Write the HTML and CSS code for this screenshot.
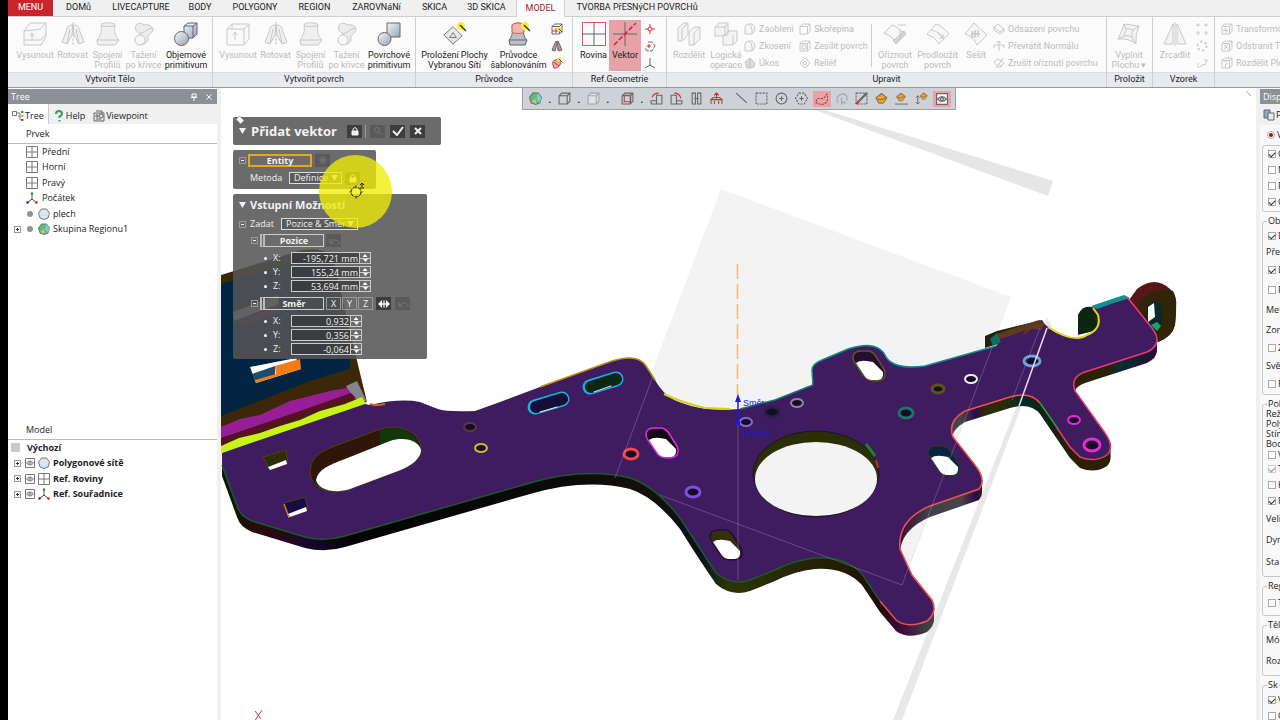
FILE: index.html
```html
<!DOCTYPE html>
<html lang="cs">
<head>
<meta charset="utf-8">
<title>Přidat vektor</title>
<link rel="stylesheet" href="styles.css">
</head>
<body>
<svg class="defs" aria-hidden="true">
  <defs>
    <linearGradient id="metal" x1="0" y1="0" x2="1" y2="1"><stop offset="0" stop-color="#f4f6fa"/><stop offset="1" stop-color="#99a2b3"/></linearGradient>
    <symbol id="extrude" viewBox="0 0 24 24"><path d="M1 9 7 1h16v14l-5 8H1z" fill="#f8f8f8"/><path d="M1 9Q13 8 17 7L23 1M1 18h17l5-6M9 19v-8m-2 3 2-3 2 3"/></symbol>
    <symbol id="openbox" viewBox="0 0 24 24"><path d="M1 7 6 2h17v15l-5 6H1zM1 7h17l5-5M18 7v16M6 2v5M9 18v-8m-2 3 2-3 2 3" fill="#f9f9f9"/></symbol>
    <symbol id="revolve" viewBox="0 0 24 24"><path d="M12 3C6 3 6 6 5 10L1 20l5 2 5-9zM12 3c6 0 6 3 7 7l4 10-5 2-5-9zM6 22l3-15M18 22 15 7" fill="#f0f0f0"/><path d="M12 0v24" stroke-dasharray="3 1"/></symbol>
    <symbol id="loft" viewBox="0 0 24 24"><path d="M5 3c0-3 14-3 14 0-1 7 0 11 4 15l-4 5H2l-1-5C5 13 6 9 5 3z" fill="#f0f0f0"/><path d="M5 3c2 2 12 2 14 0M1 18h18l4 0"/></symbol>
    <symbol id="sweep" viewBox="0 0 24 24"><path d="M4 8C1 2 9-1 12 3c3-1 8 0 9 4 0 5-7 6-5 9 1 6-8 9-11 4-3-5 3-7 5-9-3 1-5-1-6-3z" fill="#ececec"/><circle cx="8" cy="18" r="5" fill="#f8f8f8"/><path d="M10 11c4-1 5-4 10-5"/></symbol>
    <symbol id="solid" viewBox="0 0 24 24"><path d="M10 4 14 1h9v11l-4 4h-9zM10 4h9l4-3M19 4v12" fill="url(#metal)"/><circle cx="7.500" cy="16.500" r="7" fill="url(#metal)"/></symbol>
    <symbol id="surf" viewBox="0 0 24 24"><path d="M10 1h13v14H10z" fill="url(#metal)"/><circle cx="7.500" cy="17" r="6.500" fill="url(#metal)"/></symbol>
    <symbol id="quad" viewBox="0 0 24 24"><path d="M12 2 23 13 12 23 1 12z" fill="#e5e7ec"/><path d="M8 15h8l-4-6z"/></symbol>
    <symbol id="wand" viewBox="0 0 10 10"><circle cx="4" cy="4" r="4" fill="#f6ee3c" stroke="none"/><path d="m3 3 6 6" stroke="#333" stroke-width="1.500"/></symbol>
    <symbol id="grid" viewBox="0 0 12 12"><path d="M.5.5h11v11H.5zM6 .5v11M.5 6h11" fill="#fff" stroke="#777"/></symbol>
    <symbol id="axes" viewBox="0 0 12 12"><path d="M6 7V1" stroke="#2a7a2a"/><path d="m6 7-5 4" stroke="#2b2b9a"/><path d="m6 7 5 4" stroke="#b52222"/><circle cx="6" cy="1.500" r="1.200" fill="#2a8a2a" stroke="none"/><circle cx="1.500" cy="10.500" r="1.200" fill="#22a" stroke="none"/><circle cx="10.500" cy="10.500" r="1.200" fill="#b22" stroke="none"/></symbol>
    <symbol id="ball" viewBox="0 0 12 12"><path d="M3.500 1h5l3 4-1.500 5-4 1.500L2 10 .5 5z" fill="#dce6ee" stroke="#777"/></symbol>
    <symbol id="cball" viewBox="0 0 12 12"><path d="M3.500 1h5l3 4-1.500 5-4 1.500L2 10 .5 5z" fill="#5fc06a" stroke="#5d757c"/><path d="M8 1l3.500 4L10 10 7 7z" fill="#7cc8e0" stroke="none"/><path d="M2 9l4-3 1 5z" fill="#e8b47a" stroke="none"/></symbol>
    <symbol id="eye" viewBox="0 0 10 10"><path d="M.5.5h9v9h-9z" fill="#fff"/><path d="M1.500 5q3.500-4 7 0-3.500 4-7 0z"/><circle cx="5" cy="5" r="1.200"/></symbol>
    <symbol id="split" viewBox="0 0 24 24"><path d="M1 6 7 1h4v12l-6 6H1zM12 10l5-5h6v12l-6 6h-5z" fill="#f4f4f4"/><path d="M5 19V7l6-6M17 23V11l6-6"/></symbol>
    <symbol id="bool" viewBox="0 0 24 24"><path d="M1 5 5 1h9v9l-4 4H1zM9 13h5V9h9v10l-4 4H9z" fill="#f4f4f4"/><path d="M1 5h10v9M11 5l3-4M19 13v10"/></symbol>
    <symbol id="cube" viewBox="0 0 12 12"><path d="M1 3.500 3.500 1h7.500v7.500L8.500 11H1zM1 3.500h7.500V11M8.500 3.500 11 1"/></symbol>
    <symbol id="round" viewBox="0 0 12 12"><path d="M1 11V4q1-3 4-3h3q3 2 3 6l-3 4zM5 1q3 2 3 6v4" fill="#f6f6f6"/></symbol>
    <symbol id="trim" viewBox="0 0 24 24"><path d="M1 11 9 3q5 1 8 5l6 4-10 10Q11 15 1 11z" fill="#f7f7f7"/><path d="M10 19 21 9l2 3-10 10zM15 3h8M21 9l-8 13M17 8v10" fill="#d8d8d8"/></symbol>
    <symbol id="patch" viewBox="0 0 24 24"><path d="M1 12 10 2q5 1 13 10L13 22Q10 16 1 12z" fill="#f7f7f7"/><path d="M5 8q8 1 13 9M12 11l5 5m-4 0h4v-4"/></symbol>
    <symbol id="sew" viewBox="0 0 24 24"><path d="M1 12 10 1l13 12-10 10Q9 14 1 12z" fill="#f7f7f7"/><path d="M8 9v7M11 8v8M14 8v7M7 12h9" stroke-width="1.500"/></symbol>
    <symbol id="mirror" viewBox="0 0 24 24"><path d="M10 2v20H1zM14 2v20h9z" fill="#f3f3f3"/><path d="M12 0v24"/></symbol>
    <symbol id="undo" viewBox="0 0 12 10"><path d="M2 3v4h4M2 7q5-6 9-1v2"/></symbol>
    <symbol id="lock" viewBox="0 0 10 10"><path d="M2 5h6v4H2z" fill="currentColor"/><path d="M3 5V3q2-3 4 0v2"/></symbol>
    <symbol id="bucket" viewBox="0 0 14 14"><path d="M1 6 7 2l6 4-4 6H4z" fill="#f5a41c"/><path d="M1 7q5 3 11-1M4 4q3-4 6 0"/></symbol>
  </defs>
</svg>

<header class="ribbon">
  <nav class="tabs" aria-label="Karty">
    <button class="tab menu">MENU</button><button class="tab">DOMů</button><button class="tab">LIVECAPTURE</button><button class="tab">BODY</button><button class="tab">POLYGONY</button><button class="tab">REGION</button><button class="tab">ZAROVNáNí</button><button class="tab">SKICA</button><button class="tab">3D SKICA</button><button class="tab active">MODEL</button><button class="tab">TVORBA PřESNýCH POVRCHů</button>
  </nav>
  <div class="groups">
    <section class="group create">
      <div class="tools">
        <button class="tool off"><svg><use href="#extrude"/></svg>Vysunout</button>
        <button class="tool off"><svg><use href="#revolve"/></svg>Rotovat</button>
        <button class="tool off"><svg><use href="#loft"/></svg>Spojení<br>Profilů</button>
        <button class="tool off"><svg><use href="#sweep"/></svg>Tažení<br>po křivce</button>
        <button class="tool"><svg><use href="#solid"/></svg>Objemové<br>primitivum</button>
      </div>
      <h2>Vytvořit Tělo</h2>
    </section>
    <section class="group create">
      <div class="tools">
        <button class="tool off"><svg><use href="#openbox"/></svg>Vysunout</button>
        <button class="tool off"><svg><use href="#revolve"/></svg>Rotovat</button>
        <button class="tool off"><svg><use href="#loft"/></svg>Spojení<br>Profilů</button>
        <button class="tool off"><svg><use href="#sweep"/></svg>Tažení<br>po křivce</button>
        <button class="tool"><svg><use href="#surf"/></svg>Povrchové<br>primitivum</button>
      </div>
      <h2>Vytvořit povrch</h2>
    </section>
    <section class="group wizard">
      <div class="tools">
        <button class="tool"><svg viewBox="0 0 24 24"><use href="#quad" y="2" width="20" height="22"/><use href="#wand" x="14" width="10" height="10"/></svg>Proložení Plochy<br>Vybranou Sítí</button>
        <button class="tool"><svg viewBox="0 0 24 24"><path d="M5 4c0-4 12-4 12 0-1 8 0 12 3 14l-2 5H3l-1-5c3-3 4-8 3-14z" fill="#b9bec8"/><path d="M5 4c0-4 12-4 12 0v6c-2 2-10 2-12 0z" fill="#f3b3b3" stroke="#c65"/><path d="M2 18h18"/><use href="#wand" x="14" width="10" height="10"/></svg>Průvodce<br>šablonováním</button>
        <div class="minis">
          <button aria-label="Průvodce vysunutím"><svg viewBox="0 0 12 12"><use href="#cube" width="12" height="12"/><path d="M1 8h8M5 5v5" stroke="#d23"/><use href="#wand" x="6" y="4" width="6" height="6"/></svg></button>
          <button aria-label="Průvodce rotací"><svg viewBox="0 0 12 12"><path d="M5 1 1 10l3 1 2-8zM7 1l4 9-3 1-2-8z" fill="#9aa5b5"/><path d="m5 2 2 9" stroke="#d66"/></svg></button>
          <button aria-label="Průvodce tažením"><svg viewBox="0 0 12 12"><path d="M2 8C0 3 7 1 9 4c2 4-3 8-6 7z" fill="#f2a7ad" stroke="#c34"/><path d="m3 5 5 4" stroke="#c34"/><use href="#wand" x="6" width="6" height="6"/></svg></button>
        </div>
      </div>
      <h2>Průvodce</h2>
    </section>
    <section class="group ref">
      <div class="tools">
        <button class="tool"><svg viewBox="0 0 24 24"><path d="M.5.5h23v23H.5z" stroke="#e0506a"/><path d="M12 0v24M0 12h24"/></svg>Rovina</button>
        <button class="tool on"><svg viewBox="0 0 24 24"><path d="M12 0v24M0 12h24"/><path d="M1 23 23 1" stroke="#d3203c" stroke-width="1.500" stroke-dasharray="5 2"/></svg>Vektor</button>
        <div class="minis">
          <button aria-label="Bod"><svg viewBox="0 0 12 12"><path d="M6 1v10M1 6h10" stroke="#d8324a"/><circle cx="6" cy="6" r="2" fill="#fff" stroke="#d8324a"/></svg></button>
          <button aria-label="Křivka"><svg viewBox="0 0 12 12"><path d="M4 2h4l3 4-3 5H3L1 8" stroke-dasharray="5 1"/><path d="M5 4v4M3 6h4" stroke="#d23"/></svg></button>
          <button aria-label="Souřadnice"><svg viewBox="0 0 12 12"><path d="M6 1v7l-5 3M6 8l5 3"/></svg></button>
        </div>
      </div>
      <h2>Ref.Geometrie</h2>
    </section>
    <section class="group edit off">
      <div class="tools">
        <button class="tool"><svg><use href="#split"/></svg>Rozdělit</button>
        <button class="tool"><svg><use href="#bool"/></svg>Logická<br>operace</button>
        <div class="list">
          <button><svg><use href="#round"/></svg>Zaoblení</button>
          <button><svg><use href="#round"/></svg>Zkosení</button>
          <button><svg viewBox="0 0 12 12"><path d="M1 5 6 1v10H3zM6 1l5 5-1 4-4 1z" fill="#ddd"/></svg>Úkos</button>
        </div>
        <div class="list">
          <button><svg><use href="#cube"/></svg>Skořepina</button>
          <button><svg viewBox="0 0 12 12"><use href="#cube" width="12" height="12"/><path d="M3 5h4v4H3z"/></svg>Zesílit povrch</button>
          <button><svg viewBox="0 0 12 12"><path d="m6 1 5 5-5 5-5-5zM6 4l2 2-2 2-2-2z"/></svg>Reliéf</button>
        </div>
        <i class="rule"></i>
        <button class="tool"><svg><use href="#trim"/></svg>Oříznout<br>povrch</button>
        <button class="tool"><svg><use href="#patch"/></svg>Prodloužit<br>povrch</button>
        <button class="tool"><svg><use href="#sew"/></svg>Sešít</button>
        <div class="list">
          <button><svg viewBox="0 0 12 12"><path d="m1 4 4-3 6 5-4 3zM1 4v3l6 4 4-3V6"/></svg>Odsazení povrchu</button>
          <button><svg viewBox="0 0 12 12"><path d="M1 8V5h10v3M6 1v10M4 3l2-2 2 2"/></svg>Převrátit Normálu</button>
          <button><svg viewBox="0 0 12 12"><path d="m1 5 4-3 6 4-5 5zM3 11l7-10M5 7l4 3"/></svg>Zrušit oříznutí povrchu</button>
        </div>
      </div>
      <h2>Upravit</h2>
    </section>
    <section class="group fit off">
      <div class="tools"><button class="tool"><svg viewBox="0 0 24 24"><path d="M7 2q8 1 15 2-4 8-3 18Q12 16 1 17 5 9 7 2z" fill="#f4f4f4"/><path d="M9 7q4-1 7 1-2 3-1 7-4-2-8-1zM7 2l2 5M22 4l-6 4M19 22l-4-7M1 17l6-3"/></svg>Vyplnit<br>Plochu ▾</button></div>
      <h2>Proložit</h2>
    </section>
    <section class="group pattern off">
      <div class="tools">
        <button class="tool"><svg><use href="#mirror"/></svg>Zrcadlit</button>
        <div class="minis">
          <button aria-label="Lineární pole"><svg viewBox="0 0 12 12"><circle cx="2" cy="2" r="1.200"/><circle cx="10" cy="2" r="1.200"/><circle cx="2" cy="10" r="1.200"/><circle cx="10" cy="10" r="1.200"/></svg></button>
          <button aria-label="Kruhové pole"><svg viewBox="0 0 12 12"><circle cx="6" cy="6" r="4.500" stroke-dasharray="2 2.700" stroke-width="2"/></svg></button>
          <button aria-label="Pole podél křivky"><svg viewBox="0 0 12 12"><path d="M1 9q2 3 4 0t4-1l2-5M1 7h2M8 3h3"/></svg></button>
        </div>
      </div>
      <h2>Vzorek</h2>
    </section>
    <section class="group body off">
      <div class="tools">
        <div class="list">
          <button><svg viewBox="0 0 12 12"><use href="#cube" width="12" height="12"/><path d="M5 5v5M2 7.500h5"/></svg>Transformovat</button>
          <button><svg viewBox="0 0 12 12"><use href="#cube" width="12" height="12"/><path d="m3 5 4 4M7 5 3 9"/></svg>Odstranit Tělo</button>
          <button><svg viewBox="0 0 12 12"><use href="#cube" width="12" height="12"/><path d="M4 4q3 2 0 6"/></svg>Rozdělit Plochy</button>
        </div>
      </div>
      <h2></h2>
    </section>
  </div>
</header>

<main class="work">
  <aside class="side">
    <div class="cap"><span>Tree</span><span class="capbtns"><button aria-label="Připnout"><svg viewBox="0 0 8 8"><path d="M2 1h4v3H2zM1 4.500h6M4 5v3"/></svg></button><button aria-label="Zavřít"><svg viewBox="0 0 8 8"><path d="m1.500 1.500 5 5m0-5-5 5"/></svg></button></span></div>
    <div class="sidetabs">
      <button class="sel"><svg viewBox="0 0 12 12"><path d="M.5 1.500h4v4h-4zM4.500 3H8v7M8 6H6" stroke="#777"/><path d="M9 1h2.500v2H9z" fill="#3a3" stroke="none"/><path d="M9 5h2.500v2H9z" fill="#e93" stroke="none"/><path d="M9 9h2.500v2H9z" fill="#36b" stroke="none"/></svg>Tree</button>
      <button><svg viewBox="0 0 12 12"><path d="M3 4q0-3 3-3t3 2.500Q9 5.500 6.500 6.500V8M6.500 10v1.500" stroke="#3c9a5c" stroke-width="2"/></svg>Help</button>
      <button><svg viewBox="0 0 12 12"><path d="M1 3h10v8H1zM3 1h6v2M3 5h2v2H3zM3 9h5" fill="#dfe3e8"/><circle cx="8" cy="6" r="2"/></svg>Viewpoint</button>
    </div>
    <div class="colhead">Prvek</div>
    <ul class="tree features">
      <li><svg><use href="#grid"/></svg>Přední</li>
      <li><svg><use href="#grid"/></svg>Horní</li>
      <li><svg><use href="#grid"/></svg>Pravý</li>
      <li><svg><use href="#axes"/></svg>Počátek</li>
      <li class="leaf"><i class="dot"></i><svg><use href="#ball"/></svg>plech</li>
      <li class="node"><i class="plus"></i><i class="dot"></i><svg><use href="#cball"/></svg>Skupina Regionu1</li>
    </ul>
    <div class="colhead low">Model</div>
    <ul class="tree models">
      <li class="root"><i class="swatch"></i>Výchozí</li>
      <li class="node"><i class="plus"></i><svg class="eye"><use href="#eye"/></svg><svg><use href="#ball"/></svg>Polygonové sítě</li>
      <li class="node"><i class="plus"></i><svg class="eye"><use href="#eye"/></svg><svg><use href="#grid"/></svg>Ref. Roviny</li>
      <li class="node"><i class="plus"></i><svg class="eye"><use href="#eye"/></svg><svg><use href="#axes"/></svg>Ref. Souřadnice</li>
    </ul>
  </aside>

  <section class="view">
    <svg class="scene" viewBox="221 88 1035 632" preserveAspectRatio="xMidYMid slice">
      <defs>
        <linearGradient id="edge" gradientUnits="userSpaceOnUse" x1="222" x2="1176" y1="0" y2="0">
          <stop offset="0" stop-color="#07180a"/><stop offset=".04" stop-color="#2c0a0a"/><stop offset=".09" stop-color="#17092c"/><stop offset=".14" stop-color="#030303"/><stop offset=".34" stop-color="#0a0a0c"/><stop offset=".45" stop-color="#15110c"/><stop offset=".5" stop-color="#08101c"/><stop offset=".53" stop-color="#2c3408"/><stop offset=".65" stop-color="#221c06"/><stop offset=".69" stop-color="#1c0a0c"/><stop offset=".71" stop-color="#3d0a38"/><stop offset=".74" stop-color="#3f4045"/><stop offset=".775" stop-color="#45454a"/><stop offset=".79" stop-color="#2c0b48"/><stop offset=".8" stop-color="#2b2a0a"/><stop offset=".82" stop-color="#2b2a0a"/><stop offset=".84" stop-color="#072a2b"/><stop offset=".87" stop-color="#10220c"/><stop offset=".89" stop-color="#2b2008"/><stop offset=".93" stop-color="#2b2008"/><stop offset=".94" stop-color="#06302f"/><stop offset=".98" stop-color="#2b0b38"/>
        </linearGradient>
        <path id="plate" d="M222 453 365 404 370 405Q400 398 420 402 430 406 438 409T475 411L500 402 540 387 612 361Q638 353 646 366L655 380Q665 398 682 403 705 412 740 409L775 400 813 385 812 370Q812 364 822 360L848 349Q878 339 886 357 894 370 925 366L996 346 1004 335 1042 322 1053 331Q1074 342 1087 335 1102 329 1098 315L1093 307 1127 297 1152 328Q1164 344 1147 352L1085 372Q1070 377 1075 391L1105 433Q1115 447 1107 455 1095 463 1080 457L1070 447 1040 403Q1030 391 1010 397L965 411Q947 421 953 437L975 465Q987 480 979 489L930 506Q897 520 900 549L912 575 932 600Q938 612 927 621 908 629 896 620L880 601 862 574Q845 556 815 558 795 560 775 570L750 580Q731 586 716 573 700 550 680 518 655 486 630 478 585 467 530 483L345 536Q325 542 305 537L252 521Q240 516 237 506L222 465z"/>
        <path id="slot" d="M-16-8Q-16-15-8-15H0Q4-14 6-11L15 3Q17 8 15 12 12 15 5 15L0 14Q-3 13-5 10L-14-3Q-16-6-16-8z"/>
        <path id="through" d="M-13-3Q-9-6-2-5L4-4 14 6Q15 13 9 14H2Q-3 13-5 9z" fill="#fff"/>
      </defs>
      <path d="M812 106 1053 181 1048 196 812 109z" fill="#e6e6e6"/>
      <path d="M721 189 1011 297 902 585 612 477z" fill="#f3f3f3"/>
      <path d="M1047 317 1052 326 902 720h-9l130-330z" fill="#e8e8e8"/>

      <path d="M221 275 302 250Q330 246 334 262L352 340 367 402 221 452z" fill="#3c2808"/>
      <path d="M221 284 304 258Q324 258 328 268L350 359 350 369 310 381 221 416z" fill="#002441"/>
      <path d="M233 312 278 295 279 304 234 321z" fill="#b5b5bd"/><path d="M239 322 280 304 280 311 242 326z" fill="#542052"/>
      <path d="M250 367 296 358 301 369 256 383z" fill="#fff"/><path d="M252 374 275 366 275 376 255 381z" fill="#1d4c6c"/><path d="M275 366 300 359 301 369 256 383 255 380 276 374z" fill="#f47b16"/>
      <path d="M346 386 357 381 367 402 352 398z" fill="#85838c"/>
      <path d="M221 427 240 419 260 415 290 401 330 391 347 388 351 393 315 407 221 438z" fill="#981e98"/>
      <path d="M221 438 300 411 351 393 356 398 221 446z" fill="#561222"/>
      <path d="M221 446 239 438 260 433 280 426 300 420 320 411 345 404 362 397 366 404 330 417 300 429 260 441 221 453z" fill="#c6f318"/>

      <path d="M1129 300 1137 289Q1155 275 1170 289 1178 296 1176 308L1175 325Q1172 337 1158 342L1140 318z" fill="#571719"/>
      <path d="M1137 304Q1155 285 1173 291 1178 300 1175 325 1172 337 1158 342z" fill="#302508"/>
      <path d="M1147 307Q1152 299 1161 304L1162 321 1155 332 1147 320z" fill="#06292b"/><path d="M1148 307 1154 303 1155 317 1148 322z" fill="#fff"/><path d="m1151 325 6-3 4 4-4 5z" fill="#1ca36b"/>
      <path d="M985 348V336l12-5 45-11 5 8z" fill="#23200c"/>
      <path d="M1078 335V315Q1082 305 1092 307L1102 311 1098 330z" fill="#0a2510"/>

      <g fill="url(#edge)"><use href="#plate" y="11"/><use href="#plate" y="8"/><use href="#plate" y="4"/></g>
      <use href="#plate" fill="#3f1b60"/>
      <path d="m996 334 43-14 6 4-4 6-9-1-10 7 4-6-16 6-14 4z" fill="#60391e"/>
      <path d="m990 339 7-6 4 9-8 4z" fill="#0d6f60"/>
      <path d="m1091 306 33-11 6 3-16 5-17 6z" fill="#109091"/>
      <g fill="none" stroke-width="1.500">
        <path d="M222 465 237 506Q240 516 252 521L305 537Q325 542 345 536L530 483Q585 467 630 478 655 486 680 518L716 573Q731 586 750 580L775 570Q795 560 815 558 845 556 862 574L880 601" stroke="#1c5b27"/>
        <path d="M880 601 896 620Q908 629 927 621 938 612 932 600L912 575 900 549Q897 520 930 506L979 489Q987 480 975 465L953 437Q947 421 965 411L1010 397Q1030 391 1040 403" stroke="#f0504f"/>
        <path d="m1040 403 18 26" stroke="#28a238"/><path d="m1057 428 13 19 10 10Q1095 463 1107 455 1115 447 1105 433L1075 391Q1070 377 1085 372L1147 352Q1164 344 1152 328L1127 297" stroke="#ea3b70"/>
        <path d="M813 385 812 370Q812 364 822 360L848 349Q878 339 886 357 894 370 925 366L996 346" stroke="#108c84"/>
        <path d="M740 409 775 400 813 385" stroke="#14786c"/><path d="M540 387 612 361Q638 353 646 366L655 380" stroke="#b88a18"/><path d="M664 394Q680 402 705 408L730 409" stroke="#d5d21a" stroke-width="2"/><path d="M1048 327Q1074 344 1087 335 1102 329 1098 315L1093 308" stroke="#ddd720" stroke-width="2"/>
        <path d="M370 404q6 2 15 0" stroke="#c06d18" stroke-width="2"/>
      </g>

      <path d="M310 474C310 458 318 452 340 444L378 430C400 422 420 432 421 449 421 458 415 463 400 470L350 489C330 496 312 488 310 474z" fill="#301608" stroke="#4f4310"/>
      <path d="M380 430q30-8 41 18l-5 5q-12-17-36-5z" fill="#123709"/>
      <path d="M316 480C318 470 328 465 345 459L390 441C405 436 419 441 421 450 421 458 412 466 398 471L350 489C335 494 318 490 316 480z" fill="#fff"/>
      <path d="M263 457 286 450 288 463 270 470z" fill="#2d2d0a" stroke="#57400f"/><path d="m268 467 18-7 1 4-17 6z" fill="#fff"/>
      <path d="M284 503 305 497 308 508 290 517z" fill="#170d45" stroke="#57400f"/><path d="m288 514 18-7 1 4-17 6z" fill="#fff"/><path d="m284 504 5 14" stroke="#f2a22b"/>
      <g stroke-linecap="round">
        <path d="m535 407 27-8" stroke="#12b5da" stroke-width="15"/><path d="m536 407 26-8" stroke="#180c38" stroke-width="12"/><path d="M540 412l17-5" stroke="#eee"/>
        <path d="m590 387 26-8" stroke="#18a9ee" stroke-width="15"/><path d="m591 387 25-8" stroke="#0b2812" stroke-width="12"/><path d="m594 392 17-6" stroke="#eee"/>
      </g>
      <g stroke-width="1.500">
        <g transform="translate(662 443)"><use href="#slot" fill="#100812" stroke="#e130dc"/><use href="#through"/></g>
        <g transform="translate(869 366)"><use href="#slot" fill="#270b31" stroke="#5b5a17"/><use href="#through"/></g>
        <g transform="translate(944 461)"><use href="#slot" fill="#08253c" stroke="#333039"/><use href="#through"/></g>
        <g transform="translate(726 545)"><use href="#slot" fill="#33300d" stroke="#201038"/><use href="#through"/></g>
      </g>
      <ellipse cx="816" cy="474" rx="63" ry="43" fill="#2c2e06" stroke="#211031"/>
      <ellipse cx="816" cy="479" rx="61" ry="37" fill="#f3f3f3"/><path d="m866 444 9 12" stroke="#178525" stroke-width="3"/><path d="m876 460 2 8" stroke="#ba3030" stroke-width="2"/>
      <g fill="#150b25" stroke-width="2">
        <ellipse cx="470" cy="427" rx="6" ry="4" stroke="#5c3938"/><ellipse cx="481" cy="448" rx="6" ry="4" stroke="#c8bb26"/>
        <ellipse cx="631" cy="454" rx="7" ry="5" stroke="#f0454b" stroke-width="3"/><ellipse cx="693" cy="492" rx="7" ry="5" stroke="#7b51e5" stroke-width="3"/>
        <ellipse cx="746" cy="422" rx="6" ry="4" stroke="#7e6bd6"/><ellipse cx="772" cy="412" rx="7" ry="5" stroke="#26204f" stroke-width="3"/>
        <ellipse cx="797" cy="403" rx="6" ry="4" stroke="#94819d"/><ellipse cx="906" cy="413" rx="7" ry="5" stroke="#16776d" stroke-width="3"/>
        <ellipse cx="938" cy="389" rx="6" ry="4" stroke="#5c5518" stroke-width="3"/><ellipse cx="971" cy="379" rx="6" ry="4" stroke="#eee"/>
        <ellipse cx="1032" cy="361" rx="8" ry="5" stroke="#71a2dd" stroke-width="3"/><ellipse cx="1074" cy="420" rx="6" ry="4" stroke="#e62bd8"/><ellipse cx="1092" cy="445" rx="8" ry="6" stroke="#e62bd8" stroke-width="3"/>
      </g>
      <g fill="none" stroke="#c8b4dc" stroke-opacity=".3"><path d="m653 376-38 102M660 495 902 585 993 345M738 424v156M1040 328l-28 72"/></g>
      <path d="m1047 328-28 78" stroke="#e9ddf2" stroke-width="1.500"/>
      <path d="M737.500 264v132" stroke="#f0bd68" stroke-width="1.500" stroke-dasharray="15 5"/>
      <path d="M738 398v25" stroke="#1818e8" stroke-width="1.500"/><path d="m738 394 3 8h-6zM736 421h4v4h-4z" fill="#1818e8"/>
      <g class="tag"><text x="743" y="406">Směr</text><text x="743" y="436">Pozice</text></g>
      <path d="m255 711 6 8m1-9-8 12" stroke="#d03a3a" fill="none"/><path d="m1246 91 5 5" stroke="#aaa"/>
    </svg>

    <div class="viewbar" role="toolbar" aria-label="Zobrazení">
      <button aria-label="Oblasti"><svg><use href="#cball"/></svg></button><i>.</i>
      <button aria-label="Stínování"><svg><use href="#cube"/></svg></button><i>.</i>
      <button class="dim" aria-label="Průhlednost"><svg><use href="#cube" fill="#fff"/></svg></button><i>.</i>
      <button class="gap" aria-label="Pohled"><svg viewBox="0 0 12 12"><path d="M3 3h6v6H3z" stroke="#c34"/><use href="#cube" width="12" height="12"/></svg></button><i>.</i>
      <button aria-label="Otočit vlevo"><svg viewBox="0 0 12 12"><path d="M6 11V3h5v8zM1 11h5M1 11V8h5"/><path d="M2 5q1-4 6-4" stroke="#d23"/></svg></button>
      <button aria-label="Otočit vpravo"><svg viewBox="0 0 12 12"><path d="M6 11V3H1v8zM11 11H6M11 11V8H6"/><path d="M10 6q-1-5-6-5" stroke="#d23"/></svg></button>
      <button aria-label="Zrcadlit pohled"><svg viewBox="0 0 12 12"><path d="M2 1h3v10H2zM7 1h3v10H7zM4 6h4"/></svg></button>
      <button aria-label="Kolmo"><svg viewBox="0 0 12 12"><path d="M1 7v4M11 7v4M4 11V8M8 11V8"/><path d="M6 6V1M4 3l2-2 2 2M1 7l2-2h6l2 2z" stroke="#d23"/></svg></button>
      <button class="gap" aria-label="Čára"><svg viewBox="0 0 12 12"><path d="m1 1 10 9"/></svg></button>
      <button aria-label="Obdélník"><svg viewBox="0 0 12 12"><path d="M1 1h10v10H1z" stroke-dasharray="2 1"/></svg></button>
      <button aria-label="Kružnice"><svg viewBox="0 0 12 12"><circle cx="6" cy="6" r="5"/><path d="M6 4v4M4 6h4"/></svg></button>
      <button aria-label="Mnohoúhelník"><svg viewBox="0 0 12 12"><path d="M3.500 1h5L11.500 6l-3 5h-5L.5 6z" stroke-dasharray="2 1"/><path d="M6 4v4M4 6h4"/></svg></button>
      <button class="picked" aria-label="Volný výběr"><svg viewBox="0 0 12 12"><path d="M1 8q1-4 4-3t6-4q2 5-1 8t-9 0z" stroke="#943" stroke-dasharray="2 1"/></svg></button>
      <button class="dim" aria-label="Štětec"><svg viewBox="0 0 12 12"><path d="M3 10Q0 6 4 3q4-3 7 1v4M6 5v6l2-2 2 2"/></svg></button>
      <button aria-label="Viditelné"><svg viewBox="0 0 12 12"><path d="M1 1h10v10H1z" stroke-dasharray="2 1"/><path d="m4 8 7-7" stroke-width="2"/><path d="m1 11 3-3" stroke="#d23" stroke-width="2"/></svg></button>
      <button aria-label="Vyplnit"><svg><use href="#bucket"/></svg></button>
      <button aria-label="Rozšířit"><svg viewBox="0 0 14 14"><use href="#bucket" x="1" width="11" height="11"/><path d="M0 13h14"/></svg></button>
      <button aria-label="Zmenšit"><svg viewBox="0 0 14 14"><use href="#bucket" x="5" width="9" height="9"/><path d="M3 4v9M1 6l2-2 2 2M1 11l2 2 2-2"/></svg></button>
      <button class="picked framed" aria-label="Jen viditelné"><svg><use href="#eye"/></svg></button>
    </div>

    <form class="command">
      <section class="panel title">
        <svg class="pin" viewBox="0 0 8 8"><path d="M1 3 4 0l4 4-3 3zM1 7l2-2" fill="#fff" stroke="#777" stroke-width=".5"/></svg>
        <b class="tri"></b><h1>Přidat vektor</h1>
        <button type="button" class="sq lock" aria-label="Zamknout"><svg><use href="#lock"/></svg></button><i class="bar"></i>
        <button type="button" class="sq faded" aria-label="Náhled"><svg viewBox="0 0 10 10"><circle cx="4" cy="4" r="2.500"/><path d="m6 6 3 3"/></svg></button>
        <button type="button" class="sq" aria-label="Potvrdit"><svg viewBox="0 0 10 10"><path d="m0 5 4 4 6-8" stroke-width="2"/></svg></button>
        <button type="button" class="sq" aria-label="Zrušit"><svg viewBox="0 0 10 10"><path d="m2 2 6 6m0-6L2 8" stroke-width="2"/></svg></button>
      </section>
      <section class="panel entity">
        <div class="line"><i class="minus"></i><button type="button" class="pick hot">Entity</button><button type="button" class="sq faded" aria-label="Mřížka"><svg viewBox="0 0 10 10"><path d="M5 1v8M1 5h8M2 2l6 6m0-6L2 8"/></svg></button></div>
        <div class="line"><label class="lead" for="method">Metoda</label><span class="combo method"><select id="method"><option>Definice</option></select><b class="tri"></b></span><button type="button" class="sq" aria-label="Zamknout metodu"><svg><use href="#lock"/></svg></button></div>
      </section>
      <section class="panel options">
        <div class="line head"><b class="tri"></b><h2>Vstupní Možnosti</h2></div>
        <div class="line zadat"><i class="minus"></i><label for="mode">Zadat</label><span class="combo mode"><select id="mode"><option>Pozice &amp; Směr</option></select><b class="tri"></b></span></div>
        <div class="line sub"><i class="minus"></i><button type="button" class="pick">Pozice</button><button type="button" class="sq faded" aria-label="Zpět pozice"><svg><use href="#undo"/></svg></button></div>
        <div class="fields wide">
          <label><span>X:</span><input value="-195,721 mm"><i class="spin"></i></label>
          <label><span>Y:</span><input value="155,24 mm"><i class="spin"></i></label>
          <label><span>Z:</span><input value="53,694 mm"><i class="spin"></i></label>
        </div>
        <div class="line sub"><i class="minus"></i><button type="button" class="pick">Směr</button><span class="xyz"><button type="button">X</button><button type="button">Y</button><button type="button">Z</button></span><button type="button" class="sq" aria-label="Obrátit"><svg viewBox="0 0 14 10"><path d="M1 5h12M4 2 1 5l3 3zM10 2l3 3-3 3zM7 1v8" fill="currentColor" stroke-width="1.500"/></svg></button><button type="button" class="sq faded" aria-label="Zpět směr"><svg><use href="#undo"/></svg></button></div>
        <div class="fields">
          <label><span>X:</span><input value="0,932"><i class="spin"></i></label>
          <label><span>Y:</span><input value="0,356"><i class="spin"></i></label>
          <label><span>Z:</span><input value="-0,064"><i class="spin"></i></label>
        </div>
      </section>
    </form>
    <div class="spot"><svg viewBox="0 0 24 24"><circle cx="12" cy="12" r="5" stroke-dasharray="4 1"/><path d="M12 5v3M12 16v3M5 12h3M16 12h3" stroke-width=".5"/><path d="M18 3v4m-2-2 2-2 2 2M16 8h4"/></svg></div>
  </section>

  <aside class="props">
    <div class="cap">Disp</div>
    <div class="ptab"><svg viewBox="0 0 12 12"><path d="M1 1h6v8H1z" fill="#8fa5c5"/><path d="M5 4h6v7H5z" fill="#e6e8ee"/></svg>P</div>
    <label class="r20"><input type="radio" checked>V</label>
    <fieldset class="plain"><label class="r16"><input type="checkbox" checked>G</label><label class="r16"><input type="checkbox">M</label><label class="r16"><input type="checkbox">P</label><label class="r16"><input type="checkbox" checked>G</label></fieldset>
    <fieldset class="roomy"><legend>Obe</legend><label class="r16"><input type="checkbox" checked>D</label><p class="r16">Pře</p><label class="r20"><input type="checkbox" checked>L</label><label class="r20"><input type="checkbox">P</label><p class="r20">Met</p><p class="r20">Zor</p><label class="r16"><input type="checkbox">Z</label><p class="r20">Svě</p><label class="r16"><input type="checkbox">Ř</label></fieldset>
    <fieldset><legend>Pol</legend><p class="r10">Rež</p><p class="r10">Poly</p><p class="r10">Stín</p><p class="r10">Bod</p><label class="r12"><input type="checkbox">V</label><label class="r16"><input type="checkbox" checked disabled>T</label><label class="r16"><input type="checkbox">K</label><label class="r16"><input type="checkbox" checked>R</label><p class="r20">Veli</p><p class="r22">Dyn</p><p class="r22">Sta</p></fieldset>
    <fieldset class="roomy"><legend>Reg</legend><label class="r20"><input type="checkbox">T</label></fieldset>
    <fieldset><legend>Těl</legend><p class="r20">Mód</p><p class="r22">Roz</p></fieldset>
    <fieldset class="roomy"><legend>Sk</legend><label class="r16"><input type="checkbox" checked>V</label><label class="r16"><input type="checkbox">C</label></fieldset>
  </aside>
</main>
</body>
</html>
```

FILE: styles.css
```css
* { box-sizing: border-box; }
html, body { height: 100%; }
body {
  margin: 0;
  padding-left: 8px;
  display: flex;
  flex-direction: column;
  overflow: hidden;
  background: #000;
  color: #222;
  font: 9px/10px "Open Sans", "Noto Sans", sans-serif;
}
button, input, select { font: inherit; color: inherit; margin: 0; padding: 0; border: 0; background: none; }
button { display: block; white-space: nowrap; }
h1, h2, p, ul { margin: 0; padding: 0; font-size: inherit; font-weight: inherit; }
svg { fill: none; stroke: #666; flex: none; }
.defs { position: absolute; width: 0; height: 0; }

/* Ribbon */
.ribbon { background: #fbfbfb; border-bottom: 1px solid #96989c; overflow: hidden; flex: none; font-family: Roboto, "Open Sans", sans-serif; }
.tabs {
  display: grid;
  grid-template-columns: 45px 51px 74px 44px 66px 53px 71px 45px 59px 49px 144px;
  height: 17px;
  background: #f0f0f0;
  border-bottom: 1px solid #cfcfcf;
}
.tab { height: 16px; line-height: 14px; text-align: center; padding-bottom: 2px; }
.tab.menu { background: #c9252c; color: #fff; }
.tab.active { height: 17px; background: #fbfbfb; color: #a01c24; border: solid #cfcfcf; border-width: 0 1px; }
.groups { display: flex; }
.group { flex: none; border-right: 1px solid #d0d0d0; }
.group h2 { height: 15px; line-height: 13px; text-align: center; background: #e9eaee; border-top: 1px solid #dcdde0; }
.tools { display: grid; height: 55px; padding: 3px 0 1px 5px; align-items: stretch; }
.create { width: 203px; }
.create:first-child { width: 205px; }
.create:first-child .tools { padding-left: 7px; }
.create .tools { grid-template-columns: 40px 35px 35px 37px 48px; }
.wizard { width: 157px; }
.wizard .tools { grid-template-columns: 71px 57px 20px; padding-left: 3px; }
.ref { width: 94px; }
.ref .tools { grid-template-columns: 31px 32px 18px; }
.edit { width: 440px; }
.edit .tools { grid-template-columns: 38px 36px 55px 72px 3px 42px 43px 34px 110px; padding-left: 3px; }
.fit { width: 46px; }
.fit .tools { grid-template-columns: 34px; }
.pattern { width: 62px; }
.pattern .tools { grid-template-columns: 34px 16px; column-gap: 2px; }
.body { width: 110px; }
.body .tools { padding-left: 6px; }
.tool { display: flex; flex-direction: column; align-items: center; justify-content: flex-start; text-align: center; line-height: 10px; padding-top: 2px; }
.tool svg { width: 24px; height: 24px; margin-bottom: 4px; }
.off .tool, .tool.off, .off .list { color: #bcbcbc; }
.off svg, .tool.off svg { stroke: #c8c8c8; }
.tool.on { background: #e6a2a6; }
.minis, .list { display: grid; grid-template-rows: 17px 17px 17px; align-items: center; }
.minis { justify-items: center; }
.minis svg, .list svg { display: block; width: 12px; height: 12px; }
.list button { display: flex; align-items: center; gap: 3px; }
.rule { border-left: 1px solid #ccc; margin: 4px 0; }

/* Workspace */
.work { flex: 1; min-height: 0; display: flex; background: #f0f0f0; }
.cap { display: flex; justify-content: space-between; height: 15px; line-height: 15px; margin-top: 1px; padding: 0 4px 0 3px; background: #8d9095; color: #fff; }
.capbtns { display: flex; align-items: center; gap: 7px; }
.cap svg { display: block; width: 8px; height: 8px; stroke: #fff; }
.side { width: 209px; margin-right: 4px; flex: none; display: flex; flex-direction: column; background: #fff; }
.sidetabs { display: flex; height: 20px; background: #f0f0f0; }
.sidetabs button { display: flex; align-items: center; gap: 1px; padding: 3px 4px 0 4px; }
.sidetabs .sel { background: #fff; border-right: 1px solid #ccc; padding-left: 4px; }
.sidetabs svg { width: 12px; height: 12px; }
.colhead { height: 20px; line-height: 20px; padding-left: 18px; border-bottom: 1px solid #bbb; }
.colhead.low { margin-top: 183px; }
.tree { list-style: none; display: flex; flex-direction: column; }
.features { height: 93px; }
.models { height: 62px; font-weight: bold; }
.tree li { flex: 1; display: flex; align-items: center; gap: 4px; padding-left: 18px; }
.tree li.leaf { gap: 3px; padding-left: 17px; }
.tree li.node { padding-left: 6px; gap: 3px; }
.tree li.root { padding-left: 3px; gap: 7px; }
.tree svg { width: 12px; height: 12px; }
.tree svg.eye { width: 10px; height: 10px; stroke: #777; }
.dot { width: 6px; height: 6px; margin: 0 2px; border-radius: 50%; background: #929292; }
.swatch { width: 9px; height: 9px; background: #c8c8c8; }
.plus, .minus { flex: none; width: 7px; height: 7px; border: 1px solid #999; background: linear-gradient(currentColor, currentColor) center / 3px 1px no-repeat; }
.plus { background: linear-gradient(#335, #335) center / 3px 1px no-repeat, linear-gradient(#335, #335) center / 1px 3px no-repeat; margin-right: 1px; }

/* Viewport */
.view { flex: 1; min-width: 0; position: relative; background: #fff; overflow: hidden; }
.scene { position: absolute; inset: 0; width: 100%; height: 100%; stroke: none; }
.tag { font: 9px "Liberation Sans", sans-serif; fill: #1717e6; }
.viewbar { position: relative; display: flex; width: max-content; height: 22px; margin: 0 auto; padding: 0 3px; background: #ced1d6; border: solid #9b9ea3; border-width: 0 1px 1px; }
.viewbar button { display: grid; place-items: center; width: 20px; }
.viewbar svg { width: 13px; height: 13px; }
.viewbar i { width: 9px; padding-left: 3px; line-height: 24px; font-style: normal; font-weight: bold; }
.viewbar .gap { box-sizing: content-box; padding-left: 5px; }
.viewbar .dim { opacity: .4; }
.viewbar .picked { background: #e7a3a7; height: 16px; margin: 3px 1px; width: 18px; }
.viewbar .framed svg { width: 12px; height: 12px; }

/* Command panels float over the model */
.command { position: absolute; left: 12px; top: 29px; display: flex; flex-direction: column; align-items: flex-start; gap: 5px; color: #f2f2f2; }
.command svg { stroke: currentColor; }
.panel { background: rgba(85, 85, 85, .87); border-radius: 2px; }
.panel.title { position: relative; display: flex; align-items: center; width: 208px; height: 28px; padding-left: 6px; }
.title h1 { font-size: 13px; line-height: 16px; font-weight: bold; width: 88px; margin-left: 5px; }
.pin { position: absolute; left: 2px; top: -1px; width: 9px; height: 9px; }
.tri { display: block; flex: none; width: 7px; height: 6px; background: currentColor; clip-path: polygon(0 0, 100% 0, 50% 100%); }
.sq { flex: none; width: 15px; height: 13px; display: grid; place-items: center; background: #3d3d3d; }
.sq svg { width: 12px; height: 10px; }
.sq.faded { color: #777; background: #5a5a5a; }
.lock { margin-left: 8px; }
.bar { width: 1px; height: 13px; background: #999; margin: 0 4px 0 3px; }
.title .sq + .sq { margin-left: 5px; }
.line { display: flex; align-items: center; height: 14px; }
.entity { width: 143px; height: 39px; padding: 3px 0 0 6px; }
.entity .line + .line { margin-top: 4px; }
.pick { width: 64px; height: 13px; line-height: 11px; margin: 0 3px; border: 1px solid #ccc; border-left: 5px double #bbb; font-weight: bold; text-align: center; }
.entity .pick { margin-left: 2px; }
.pick.hot { border: 2px solid #e9a51d; line-height: 9px; }
.lead { width: 39px; margin-left: 11px; }
.combo { display: grid; grid-template-columns: 1fr 13px; align-items: center; height: 12px; border: 1px solid #ddd; background: rgba(60, 60, 60, .35); }
.combo select { appearance: none; height: 10px; padding-left: 4px; grid-area: 1 / 1 / 2 / 3; width: 100%; }
.combo option { color: #222; }
.combo .tri { grid-area: 1 / 2; justify-self: center; pointer-events: none; }
.method { width: 53px; margin: 0 3px 0 0; }
.mode { width: 77px; }
.options { width: 194px; padding: 3px 0 2px 6px; }
.options .head { height: 16px; gap: 4px; }
.head h2 { font-size: 11px; line-height: 16px; font-weight: bold; }
.zadat { margin-top: 4px; height: 14px; }
.zadat label { width: 31px; margin-left: 4px; }
.sub { height: 15px; margin-top: 2px; padding-left: 12px; }
.sub .pick { margin-left: 2px; margin-right: 2px; }
.xyz { display: flex; gap: 1px; margin-right: 3px; }
.xyz button { width: 15px; height: 13px; border: 1px solid #999; line-height: 11px; }
.sub .sq + .sq { margin-left: 4px; }
.fields { padding: 3px 0 1px 25px; }
.fields label { display: grid; grid-template-columns: 27px 60px 11px; align-items: center; height: 14px; }
.fields.wide label { grid-template-columns: 27px 69px 11px; }
.fields span { display: flex; align-items: center; gap: 6px; }
.fields span::before { content: ""; width: 3px; height: 3px; border-radius: 50%; background: #fff; }
.fields input { width: 100%; height: 12px; border: 1px solid #ccc; background: rgba(50, 50, 55, .65); text-align: right; padding-right: 1px; }
.spin { height: 12px; border: 1px solid #ccc; border-left: 0; display: grid; justify-items: center; align-content: space-between; padding: 1px 0; background: linear-gradient(#ccc, #ccc) center / 100% 1px no-repeat; }
.spin::before, .spin::after { content: ""; width: 5px; height: 3px; background: #fff; clip-path: polygon(50% 0, 100% 100%, 0 100%); }
.spin::after { transform: rotate(180deg); }
.spot { position: absolute; left: 98px; top: 67px; width: 73px; height: 73px; display: grid; place-items: center; border-radius: 50%; background: rgba(240, 236, 8, .78); pointer-events: none; }
.spot svg { width: 24px; height: 24px; stroke: #222; }

/* Display properties, running past the window edge */
.props { flex: none; width: 20px; margin-left: 4px; overflow: hidden; background: #f9f9f9; white-space: nowrap; }
.ptab { height: 21px; display: flex; align-items: center; gap: 1px; padding-left: 3px; background: #f0f0f0; }
.ptab svg { width: 12px; height: 12px; }
.props label, .props p { display: flex; align-items: center; gap: 2px; }
.props > label { padding-left: 7px; }
.props p { padding-left: 3px; }
.props fieldset { width: 160px; min-width: 0; margin: 0 0 4px 2px; padding: 0 0 3px; border: 1px solid #c6c6c6; border-radius: 3px; }
.props fieldset.plain { padding: 0 0 1px; }
.props fieldset.roomy { padding: 2px 0; }
.props legend { padding: 0 1px; margin-left: 4px; line-height: 10px; }
.props fieldset label { padding-left: 5px; }
.r10 { height: 10px; }
.r12 { height: 12px; }
.r16 { height: 16px; }
.r20 { height: 20px; }
.r22 { height: 22px; }
.props input { appearance: none; flex: none; width: 8px; height: 8px; border: 1px solid #aaa; background: #fff; display: grid; place-items: center; }
.props input[type=radio] { border-radius: 50%; }
.props input[type=radio]:checked::after { content: ""; width: 4px; height: 4px; border-radius: 50%; background: #a11; }
.props input[type=checkbox]:checked::after { content: ""; width: 5px; height: 3px; border: solid #333; border-width: 0 0 1px 1px; transform: rotate(-45deg); }
.props input:disabled { opacity: .5; }
```
